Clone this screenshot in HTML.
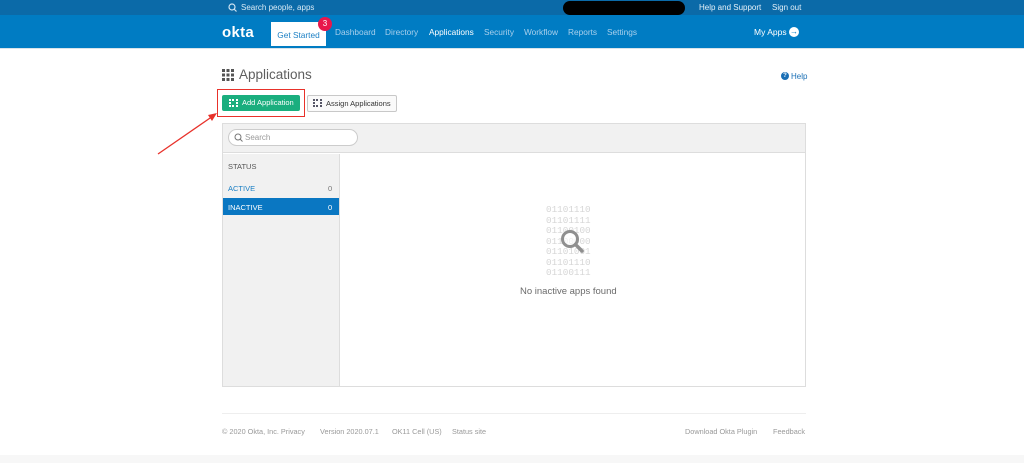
<!DOCTYPE html>
<html><head><style>
*{margin:0;padding:0;box-sizing:border-box}
body{width:1024px;height:463px;overflow:hidden;background:#fff;font-family:"Liberation Sans",sans-serif;position:relative}
.a{position:absolute}
.top{left:0;top:0;width:1024px;height:15px;background:#0b6aa8}
.nav{left:0;top:15px;width:1024px;height:34px;background:#007cc3;border-bottom:1px solid #d8e3ea}
.t{font-size:8px;white-space:nowrap}
.n{font-size:8.3px;color:#a9d0ec;top:27px}
</style></head><body>
<div class="a top"></div>
<svg class="a" style="left:228px;top:3px" width="9" height="9"><circle cx="4" cy="4" r="3" fill="none" stroke="#cfe4f3" stroke-width="1.2"/><line x1="6" y1="6" x2="8.5" y2="8.5" stroke="#cfe4f3" stroke-width="1.2"/></svg>
<div class="a t" style="left:241px;top:3px;color:#d8eaf6">Search people, apps</div>
<div class="a" style="left:563px;top:1px;width:122px;height:14px;background:#000;border-radius:7px"></div>
<div class="a t" style="left:699px;top:3px;color:#e6f1f9">Help and Support</div>
<div class="a t" style="left:772px;top:3px;color:#e6f1f9">Sign out</div>
<div class="a nav"></div>
<div class="a" style="left:222px;top:24px;color:#fff;font-size:15px;font-weight:bold;letter-spacing:0.3px">okta</div>
<div class="a" style="left:271px;top:22px;width:55px;height:24px;background:#fff;color:#1a7fc4;font-size:8.3px;text-align:center;line-height:26px">Get Started</div>
<div class="a" style="left:318px;top:17px;width:14px;height:14px;border-radius:7px;background:#e8174b;color:#fff;font-size:8px;text-align:center;line-height:14px">3</div>
<div class="a n" style="left:335px">Dashboard</div>
<div class="a n" style="left:385px">Directory</div>
<div class="a n" style="left:429px;color:#fff">Applications</div>
<div class="a n" style="left:484px">Security</div>
<div class="a n" style="left:524px">Workflow</div>
<div class="a n" style="left:568px">Reports</div>
<div class="a n" style="left:607px">Settings</div>
<div class="a" style="left:754px;top:27px;color:#fff;font-size:8.5px">My Apps</div>
<div class="a" style="left:789px;top:27px;width:10px;height:10px;border-radius:5px;background:#fff;color:#007cc3;font-size:8px;line-height:10px;text-align:center;font-weight:bold">→</div>

<svg class="a" style="left:222px;top:69px" width="12" height="12" fill="#555"><rect x="0" y="0" width="3" height="3"/><rect x="4.5" y="0" width="3" height="3"/><rect x="9" y="0" width="3" height="3"/><rect x="0" y="4.5" width="3" height="3"/><rect x="4.5" y="4.5" width="3" height="3"/><rect x="9" y="4.5" width="3" height="3"/><rect x="0" y="9" width="3" height="3"/><rect x="4.5" y="9" width="3" height="3"/><rect x="9" y="9" width="3" height="3"/></svg>
<div class="a" style="left:239px;top:67px;font-size:13.5px;color:#5e5e5e">Applications</div>
<div class="a" style="left:781px;top:72px;width:8px;height:8px;border-radius:4px;background:#1a6fb5;color:#fff;font-size:6px;text-align:center;line-height:8px;font-weight:bold">?</div>
<div class="a t" style="left:791px;top:72px;color:#1a6fb5">Help</div>

<div class="a" style="left:217px;top:89px;width:88px;height:28px;border:1.5px solid #e8312a"></div>
<div class="a" style="left:222px;top:95px;width:78px;height:16px;background:#1aae7e;border-radius:2px;color:#fff;font-size:7.5px;line-height:16px;padding-left:20px">Add Application</div>
<div class="a" style="left:229px;top:99px;width:9px;height:8px;border:2px dotted #fff"></div>
<div class="a" style="left:307px;top:95px;width:90px;height:17px;border:1px solid #c8c8c8;border-radius:2px;background:#fafafa;color:#333;font-size:7.5px;line-height:15px;padding-left:18px">Assign Applications</div>
<div class="a" style="left:313px;top:99px;width:9px;height:8px;border:2px dotted #556"></div>
<svg class="a" style="left:155px;top:112px" width="65" height="45"><line x1="3" y1="42" x2="58" y2="4" stroke="#e8312a" stroke-width="1.3"/><polygon points="62,1 53,3 57,9" fill="#e8312a"/></svg>

<div class="a" style="left:222px;top:123px;width:584px;height:264px;border:1px solid #ddd;background:#fff"></div>
<div class="a" style="left:223px;top:124px;width:582px;height:29px;background:#f1f1f1;border-bottom:1px solid #ddd"></div>
<div class="a" style="left:228px;top:129px;width:130px;height:17px;border:1px solid #ccc;border-radius:9px;background:#fff"></div>
<svg class="a" style="left:234px;top:133px" width="9" height="9"><circle cx="4" cy="4" r="3" fill="none" stroke="#777" stroke-width="1"/><line x1="6" y1="6" x2="8.5" y2="8.5" stroke="#777" stroke-width="1"/></svg>
<div class="a t" style="left:245px;top:133px;color:#999">Search</div>
<div class="a" style="left:223px;top:154px;width:117px;height:232px;background:#f1f1f1;border-right:1px solid #ddd"></div>
<div class="a t" style="left:228px;top:162px;color:#555;font-size:7.5px">STATUS</div>
<div class="a t" style="left:228px;top:184px;color:#1a7fc4;font-size:7.5px">ACTIVE</div>
<div class="a t" style="left:328px;top:184px;color:#777;font-size:7.5px">0</div>
<div class="a" style="left:223px;top:198px;width:116px;height:17px;background:#0a77c2"></div>
<div class="a t" style="left:228px;top:203px;color:#fff;font-size:7.5px">INACTIVE</div>
<div class="a t" style="left:328px;top:203px;color:#fff;font-size:7.5px">0</div>

<div class="a" style="left:546px;top:205px;font-family:'Liberation Mono',monospace;font-size:9.3px;line-height:10.5px;color:#d6d6d6">01101110<br>01101111<br>01100100<br>01100000<br>01101001<br>01101110<br>01100111</div>
<svg class="a" style="left:558px;top:227px" width="30" height="30"><circle cx="12" cy="12" r="7.5" fill="rgba(255,255,255,.6)" stroke="#8f8f8f" stroke-width="3"/><line x1="17.5" y1="17.5" x2="24" y2="24" stroke="#8f8f8f" stroke-width="3.5" stroke-linecap="round"/></svg>
<div class="a" style="left:520px;top:286px;font-size:9.5px;color:#6b6b6b">No inactive apps found</div>

<div class="a" style="left:222px;top:413px;width:584px;height:1px;background:#eee"></div>
<div class="a t" style="left:222px;top:427px;color:#999;font-size:7.3px">© 2020 Okta, Inc. Privacy</div>
<div class="a t" style="left:320px;top:427px;color:#999;font-size:7.3px">Version 2020.07.1</div>
<div class="a t" style="left:392px;top:427px;color:#999;font-size:7.3px">OK11 Cell (US)</div>
<div class="a t" style="left:452px;top:427px;color:#999;font-size:7.3px">Status site</div>
<div class="a t" style="left:685px;top:427px;color:#999;font-size:7.3px">Download Okta Plugin</div>
<div class="a t" style="left:773px;top:427px;color:#999;font-size:7.3px">Feedback</div>
<div class="a" style="left:0;top:455px;width:1024px;height:8px;background:#f7f7f7"></div>
</body></html>
